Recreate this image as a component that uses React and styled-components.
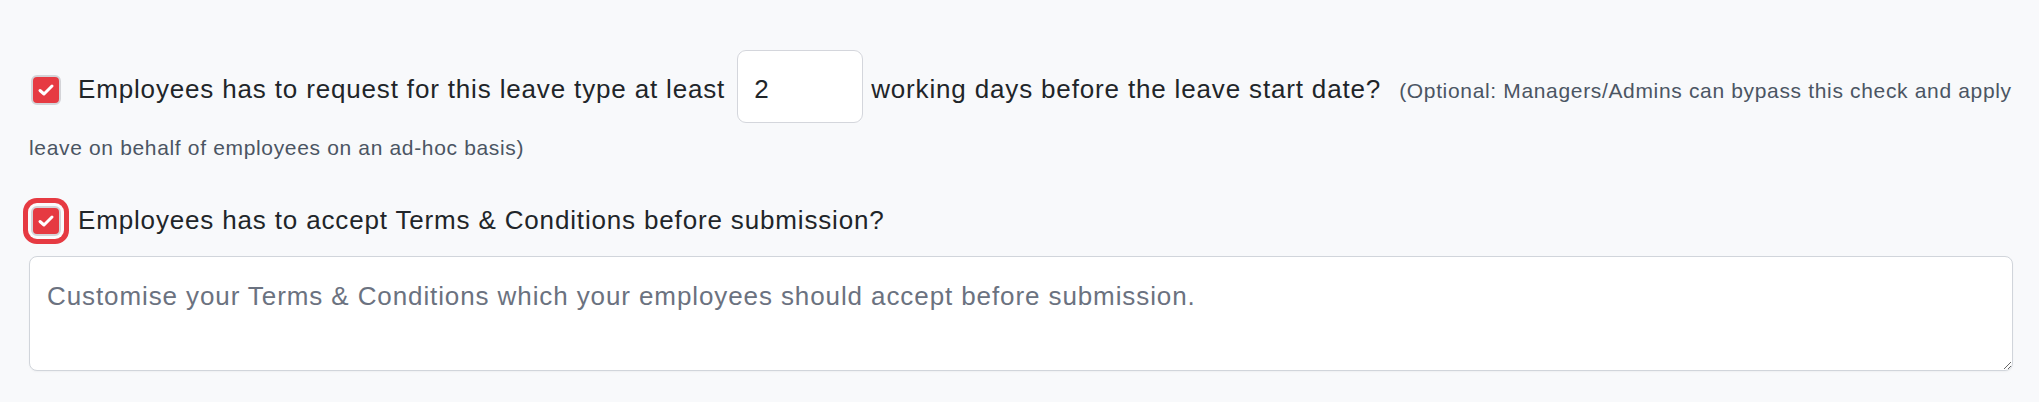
import React from 'react'
import styled, { createGlobalStyle } from 'styled-components'

const GlobalStyle = createGlobalStyle`
  html, body {
    margin: 0;
    padding: 0;
    background: #f8f9fb;
    font-family: "Liberation Sans", Arial, sans-serif;
  }
`

const Check = () => (
  <svg width="18" height="14" viewBox="0 0 18 14">
    <path d="M3 7.5 L7 11 L15 3" fill="none" stroke="#fff" strokeWidth="3" strokeLinecap="round" strokeLinejoin="round" />
  </svg>
)

const App = () => {
  return (
    <Page>
      <GlobalStyle />
      <Settings>
        <Rule>
          <Box><Check /></Box>
          <Label>Employees has to request for this leave type at least</Label>
          <DaysInput type="text" defaultValue="2" />
          <Label>working days before the leave start date?</Label>
          <Hint>(Optional: Managers/Admins can bypass this check and apply leave on behalf of employees on an ad-hoc basis)</Hint>
        </Rule>

        <TermsRow>
          <Box focused><Check /></Box>
          <Label>Employees has to accept Terms &amp; Conditions before submission?</Label>
        </TermsRow>

        <Terms placeholder="Customise your Terms & Conditions which your employees should accept before submission." />
      </Settings>
    </Page>
  )
}

const Page = styled.div`
width: 100%;
min-height: 402px;
background: #f8f9fb;
`
const Settings = styled.div`
padding: 50px 26px 0 29px;
display: flex;
flex-direction: column;
`
const Rule = styled.p`
margin: 0;
font-size: 21px;
letter-spacing: 0.66px;
line-height: 36px;
color: #4b5563;
`
const Box = styled.span`
display: inline-flex;
align-items: center;
justify-content: center;
flex-shrink: 0;
box-sizing: border-box;
width: 30px;
height: 30px;
margin: 0 17px 4px 2px;
vertical-align: middle;
background: #e63a42;
border: 2px solid #d4d4d8;
border-radius: 6px;
box-shadow: ${p => p.focused ? '0 0 0 3px #fbfbfc, 0 0 0 8px #e63a42' : 'none'};
`
const Label = styled.span`
font-size: 26px;
letter-spacing: 0.84px;
color: #212529;
`
const DaysInput = styled.input`
box-sizing: border-box;
width: 126px;
height: 73px;
margin: 0 8px 7px 12px;
padding: 5px 16px 0;
vertical-align: baseline;
border: 1.5px solid #d4d6dc;
border-radius: 9px;
background: #fff;
font-family: "Liberation Sans", Arial, sans-serif;
font-size: 26px;
color: #212529;
outline: none;
`
const Hint = styled.span`
margin-left: 18px;
`
const TermsRow = styled.div`
display: flex;
align-items: center;
margin-top: 39px;
& > span:first-child {
  margin-bottom: 0;
}
`
const Terms = styled.textarea`
box-sizing: border-box;
margin-top: 20px;
width: 100%;
height: 115px;
padding: 21px 17px 12px;
border: 1.5px solid #d1d5db;
border-radius: 8px;
background: #fff;
font-family: "Liberation Sans", Arial, sans-serif;
font-size: 26px;
letter-spacing: 0.9px;
line-height: 1.4;
color: #212529;
box-shadow: 0 1px 2px rgba(0,0,0,0.04);
outline: none;
&::placeholder {
  color: #6b7280;
}
`

export default App
